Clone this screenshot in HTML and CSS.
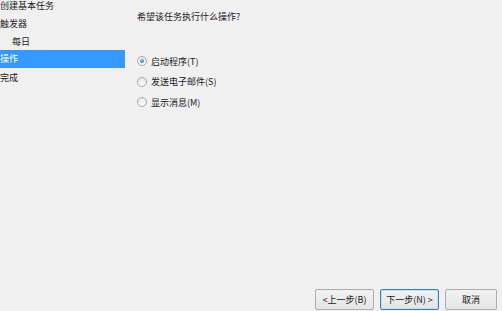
FILE: index.html
```html
<!DOCTYPE html>
<html lang="zh">
<head>
  <meta charset="UTF-8">
  <title>创建基本任务向导</title>
  <link rel="stylesheet" href="styles.css">
</head>
<body>
  <div class="wizard">
    <!-- 左侧步骤 -->
    <ul class="steps">
      <li>创建基本任务</li>
      <li>触发器</li>
      <li class="sub">每日</li>
      <li class="active">操作</li>
      <li>完成</li>
    </ul>
    <!-- 右侧内容 -->
    <div class="content">
      <p class="question">希望该任务执行什么操作?</p>
      <div class="options">
        <label class="option"><span class="radio checked"></span>启动程序(T)</label>
        <label class="option"><span class="radio"></span>发送电子邮件(S)</label>
        <label class="option"><span class="radio"></span>显示消息(M)</label>
      </div>
    </div>
  </div>
  <!-- 底部按钮 -->
  <div class="buttons">
    <button class="btn">&lt;上一步(B)</button>
    <button class="btn primary">下一步(N) &gt;</button>
    <button class="btn cancel">取消</button>
  </div>
</body>
</html>
```

FILE: styles.css
```css
html, body {
  margin: 0;
  height: 100%;
}
body {
  background: #f0f0f0;
  font-family: "Noto Sans CJK SC", "Liberation Sans", sans-serif;
  font-size: 9px;
  color: #1a1a1a;
  display: flex;
  flex-direction: column;
  overflow: hidden;
}
.wizard {
  flex: 1;
  display: flex;
}
.steps {
  list-style: none;
  margin: -3px 0 0 0;
  padding: 0;
  width: 125px;
}
.steps li {
  height: 18px;
  line-height: 18px;
}
.steps li.sub {
  padding-left: 12px;
}
.steps li.active {
  height: 18px;
  margin-top: -1px;
  margin-bottom: 1px;
  background: #3399ff;
  color: #fff;
}
.content {
  flex: 1;
  padding-left: 12px;
}
.question {
  margin: 11px 0 0 0;
  line-height: 12px;
}
.options {
  margin-top: 32px;
  display: flex;
  flex-direction: column;
  gap: 8.5px;
}
.option {
  display: flex;
  align-items: center;
  height: 12px;
  gap: 4px;
}
.radio {
  width: 8px;
  height: 8px;
  border: 1px solid #a8a8a8;
  border-radius: 50%;
  background: linear-gradient(#e8e8e8, #fafafa);
  display: flex;
  align-items: center;
  justify-content: center;
}
.radio.checked::after {
  content: "";
  width: 4px;
  height: 4px;
  border-radius: 50%;
  background: radial-gradient(circle at 40% 35%, #7fc4ef, #1f5f8f);
}
.buttons {
  display: flex;
  justify-content: flex-end;
  gap: 6px;
  padding: 0 5px 1px 0;
}
.btn {
  width: 59px;
  height: 21px;
  font-family: inherit;
  font-size: 9px;
  color: #1a1a1a;
  border: 1px solid #acacac;
  border-radius: 2px;
  background: linear-gradient(#f2f2f2, #e4e4e4);
  padding: 0;
}
.btn.primary {
  border-color: #3c7fb1;
  box-shadow: inset 0 0 0 1px #bfe0f6;
}
.btn.cancel {
  width: 52px;
}
```
